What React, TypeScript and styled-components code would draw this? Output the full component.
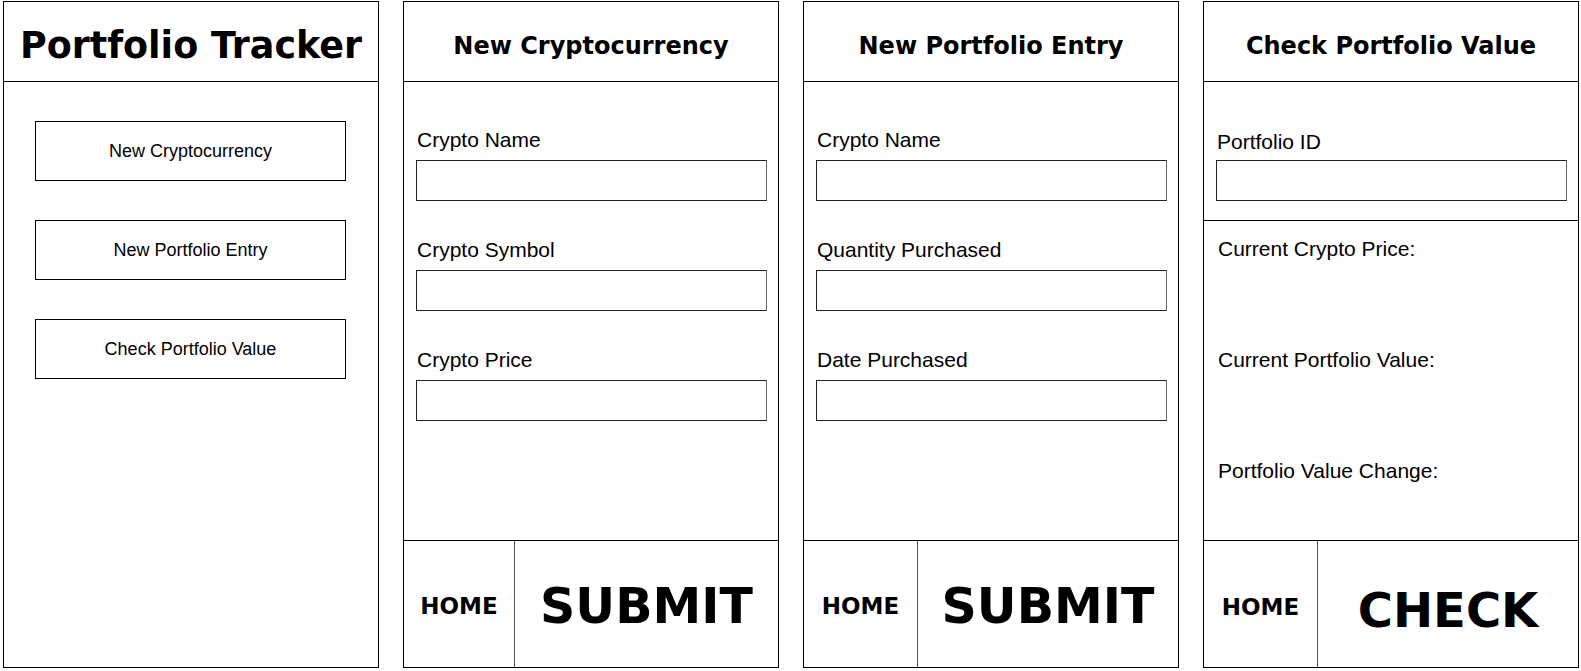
import React from "react";
import styled, { createGlobalStyle } from "styled-components";

const GlobalStyle = createGlobalStyle`
  html, body {
    margin: 0;
    padding: 0;
    background: #ffffff;
  }
  body {
    font-family: "Liberation Sans", Arial, sans-serif;
    color: #000000;
  }
`;

const Page = styled.main`
  display: flex;
  gap: 24px;
  padding: 1px 0 0 3px;
`;

const Panel = styled.section`
  box-sizing: border-box;
  width: 376px;
  height: 667px;
  border: 1px solid #000;
  display: flex;
  flex-direction: column;
  background: #fff;
`;

const Header = styled.header<{ $shift: number }>`
  box-sizing: border-box;
  height: 80px;
  flex-shrink: 0;
  border-bottom: 1px solid #000;
  display: flex;
  align-items: center;
  justify-content: center;
  padding-top: ${(p) => p.$shift}px;
`;

const Title = styled.h1<{ $size: number }>`
  margin: 0;
  font-family: "DejaVu Sans", Verdana, sans-serif;
  font-weight: bold;
  font-size: ${(p) => p.$size}px;
  line-height: normal;
  white-space: nowrap;
`;

const NavList = styled.nav`
  flex: 1;
  display: flex;
  flex-direction: column;
  gap: 39px;
  padding: 39px 0 0 31px;
`;

const NavButton = styled.button`
  box-sizing: border-box;
  width: 311px;
  height: 60px;
  padding: 0;
  border: 1px solid #000;
  background: #fff;
  color: #000;
  font-family: "Liberation Sans", Arial, sans-serif;
  font-size: 18px;
  cursor: pointer;
`;

const Section = styled.div<{ $top: number; $bottom?: number; $gap: number; $divider?: boolean }>`
  display: flex;
  flex-direction: column;
  gap: ${(p) => p.$gap}px;
  padding: ${(p) => p.$top}px 11px ${(p) => p.$bottom ?? 0}px 12px;
  border-bottom: ${(p) => (p.$divider ? "1px solid #000" : "none")};
`;

const Filler = styled.div`
  flex: 1;
`;

const Field = styled.label<{ $gap: number }>`
  display: flex;
  flex-direction: column;
  gap: ${(p) => p.$gap}px;
`;

const FieldLabel = styled.span<{ $indent?: number }>`
  font-size: 21px;
  line-height: 24px;
  padding-left: ${(p) => p.$indent ?? 1}px;
  white-space: nowrap;
`;

const Input = styled.input`
  box-sizing: border-box;
  width: 100%;
  height: 41px;
  margin: 0;
  border: 1px solid #222;
  border-right-color: #666;
  background: #fff;
  outline: none;
  font-family: "Liberation Sans", Arial, sans-serif;
  font-size: 18px;
  padding: 0 6px;
`;

const Footer = styled.footer<{ $home: number }>`
  box-sizing: border-box;
  height: 127px;
  flex-shrink: 0;
  border-top: 1px solid #000;
  display: grid;
  grid-template-columns: ${(p) => p.$home}px 1fr;
`;

const FooterButton = styled.button<{ $size: number; $shift: number; $divider?: boolean }>`
  box-sizing: border-box;
  margin: 0;
  padding: ${(p) => p.$shift}px 0 0 0;
  border: none;
  border-right: ${(p) => (p.$divider ? "1px solid #555" : "none")};
  background: #fff;
  color: #000;
  display: flex;
  align-items: center;
  justify-content: center;
  font-family: "DejaVu Sans", Verdana, sans-serif;
  font-weight: bold;
  font-size: ${(p) => p.$size}px;
  cursor: pointer;
`;

type FormProps = {
  title: string;
  fields: string[];
  action: string;
  home: number;
};

const FormPanel: React.FC<FormProps> = ({ title, fields, action, home }) => (
  <Panel>
    <Header $shift={8}>
      <Title $size={24}>{title}</Title>
    </Header>
    <Section $top={46} $gap={37}>
      {fields.map((f) => (
        <Field key={f} $gap={8}>
          <FieldLabel>{f}</FieldLabel>
          <Input type="text" />
        </Field>
      ))}
    </Section>
    <Filler />
    <Footer $home={home}>
      <FooterButton $size={23} $shift={3} $divider>
        HOME
      </FooterButton>
      <FooterButton $size={49} $shift={5}>
        {action}
      </FooterButton>
    </Footer>
  </Panel>
);

export default function App() {
  return (
    <>
      <GlobalStyle />
      <Page>
        <Panel>
          <Header $shift={8}>
            <Title $size={36.5}>Portfolio Tracker</Title>
          </Header>
          <NavList>
            <NavButton>New Cryptocurrency</NavButton>
            <NavButton>New Portfolio Entry</NavButton>
            <NavButton>Check Portfolio Value</NavButton>
          </NavList>
        </Panel>

        <FormPanel
          title="New Cryptocurrency"
          fields={["Crypto Name", "Crypto Symbol", "Crypto Price"]}
          action="SUBMIT"
          home={111}
        />

        <FormPanel
          title="New Portfolio Entry"
          fields={["Crypto Name", "Quantity Purchased", "Date Purchased"]}
          action="SUBMIT"
          home={114}
        />

        <Panel>
          <Header $shift={8}>
            <Title $size={24}>Check Portfolio Value</Title>
          </Header>
          <Section $top={48} $bottom={19} $gap={0} $divider>
            <Field $gap={6}>
              <FieldLabel>Portfolio ID</FieldLabel>
              <Input type="text" />
            </Field>
          </Section>
          <Section $top={16} $gap={87}>
            <FieldLabel $indent={2}>Current Crypto Price:</FieldLabel>
            <FieldLabel $indent={2}>Current Portfolio Value:</FieldLabel>
            <FieldLabel $indent={2}>Portfolio Value Change:</FieldLabel>
          </Section>
          <Filler />
          <Footer $home={114}>
            <FooterButton $size={23} $shift={5} $divider>
              HOME
            </FooterButton>
            <FooterButton $size={48} $shift={11}>
              CHECK
            </FooterButton>
          </Footer>
        </Panel>
      </Page>
    </>
  );
}
